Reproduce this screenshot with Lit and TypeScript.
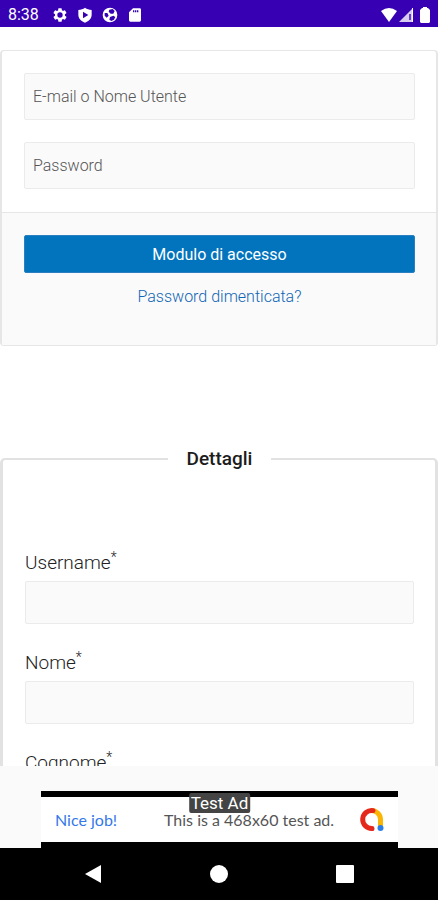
import { LitElement, html, css, svg } from "lit";
import { customElement } from "lit/decorators.js";

const gear = svg`<path fill-rule="evenodd" d="M19.4 13a7.5 7.5 0 0 0 0-2l2.1-1.65c.2-.15.25-.42.12-.64l-2-3.46a.5.5 0 0 0-.61-.22l-2.49 1a7.3 7.3 0 0 0-1.69-.98l-.38-2.65A.49.49 0 0 0 14 2h-4a.49.49 0 0 0-.49.42l-.38 2.65c-.61.25-1.17.59-1.69.98l-2.49-1a.49.49 0 0 0-.61.22l-2 3.46a.49.49 0 0 0 .12.64L4.57 11a7.9 7.9 0 0 0 0 2l-2.11 1.65a.5.5 0 0 0-.12.64l2 3.46c.12.22.39.3.61.22l2.49-1c.52.4 1.08.73 1.69.98l.38 2.65c.03.24.24.42.49.42h4c.25 0 .46-.18.49-.42l.38-2.65c.61-.25 1.17-.59 1.69-.98l2.49 1c.23.09.49 0 .61-.22l2-3.46a.5.5 0 0 0-.12-.64L19.4 13zM12 16a4 4 0 1 1 0-8 4 4 0 0 1 0 8z"/>`;
const shield = svg`<path fill-rule="evenodd" d="M12 1C9 3 6 4 2 4.500v7C2 17 6 21 12 23.500 18 21 22 17 22 11.500v-7C18 4 15 3 12 1zM9 7l8 5-8 5z"/>`;
const ball = svg`<path fill-rule="evenodd" d="M12 1a11 11 0 1 0 0 22 11 11 0 0 0 0-22zM11 4l5-1 3 3-2 4-4 0-3-3zM4 9l4 0 2 4-3 3-3-3zM12 15l5-2 3 2-2 4-4 2-3-2z"/>`;
const sdCard = svg`<path fill-rule="evenodd" d="M9 2h10a2 2 0 0 1 2 2v16a2 2 0 0 1-2 2H5a2 2 0 0 1-2-2V8zM9 5v3h2V5zm3 0v3h2V5zm3 0v3h2V5z"/>`;

@customElement("app-root")
export class AppRoot extends LitElement {
  static styles = css`
    :host {
      display: flex;
      flex-direction: column;
      height: 100vh;
      background: #fff;
      color: #222;
      font-family: Roboto, "Liberation Sans", sans-serif;
    }
    * { box-sizing: border-box; }
    input, button { font-family: inherit; margin: 0; }
    svg { display: block; }
    .status {
      display: flex;
      flex: none;
      align-items: center;
      height: 27px;
      padding: 2px 8px 0;
      background: #3700b3;
      color: #fff;
      font-size: 16px;
    }
    .notices { display: flex; gap: 9px; margin-left: 13px; }
    .signals { display: flex; gap: 1px; margin-left: auto; }
    .status svg { width: 16px; height: 16px; fill: #fff; }
    .status .battery { width: 10px; margin-left: 5px; }
    .page {
      flex: 1;
      min-height: 0;
      overflow-y: auto;
      scrollbar-width: none;
    }
    .login {
      margin-top: 23px;
      border: solid #e6e6e6;
      border-width: 1px 2px;
      border-radius: 4px;
    }
    .credentials {
      display: flex;
      flex-direction: column;
      gap: 22px;
      padding: 22px 21px 23px 22px;
    }
    .box {
      display: block;
      width: 100%;
      height: 43px;
      padding: 0 8px;
      border: 1px solid #ebebeb;
      border-radius: 2px;
      background: #fafafa;
      color: #222;
      font-size: 16px;
      font-weight: 300;
    }
    .credentials .box { height: 47px; }
    .box::placeholder { color: #555; }
    .actions {
      display: flex;
      flex-direction: column;
      align-items: center;
      gap: 12px;
      padding: 22px 21px 36px 22px;
      border-top: 1px solid #e6e6e6;
      background: #fafafa;
    }
    .submit {
      width: 100%;
      height: 38px;
      border: 1px solid #2a7fc0;
      border-radius: 2px;
      background: #0274be;
      color: #fff;
      font-size: 16px;
      font-weight: 400;
    }
    .forgot {
      color: #0f65b5;
      font-size: 16px;
      font-weight: 300;
      line-height: 24px;
      text-decoration: none;
    }
    .details {
      min-width: 0;
      margin: 99px 0 24px;
      padding: 76px 21px 24px 22px;
      border: solid #e2e2e2;
      border-width: 2px 3px;
      border-radius: 5px;
    }
    .legend {
      margin: 0 auto;
      padding: 0 19px;
      color: #1c1c1c;
      font-size: 19px;
      font-weight: 500;
      line-height: 28px;
    }
    .field { margin-bottom: 25px; }
    .label {
      display: block;
      margin-bottom: 4px;
      font-size: 19px;
      font-weight: 300;
      line-height: 28px;
    }
    .label sup { font-size: 14px; line-height: 0; }
    .ad {
      flex: none;
      padding: 25px 40px 0 41px;
      background: #fafafa;
    }
    .banner {
      position: relative;
      display: flex;
      align-items: center;
      justify-content: space-between;
      height: 57px;
      padding: 0 13px 0 14px;
      border: solid #000;
      border-width: 6px 0;
      background: #fff;
      color: #555;
      font-family: Lato, sans-serif;
      font-size: 16px;
      text-decoration: none;
    }
    .praise { color: #3478ea; }
    .banner svg { width: 26px; height: 26px; }
    .copy { margin: 0 0 0 22px; }
    .tag {
      position: absolute;
      top: -4px;
      left: 50%;
      transform: translateX(-50%);
      padding: 0 2px;
      border-radius: 2px;
      background: #444;
      color: #fff;
      font-family: Roboto, sans-serif;
      font-size: 17px;
      line-height: 20px;
      white-space: nowrap;
    }
    .nav {
      display: flex;
      flex: none;
      align-items: center;
      justify-content: center;
      gap: 78px;
      height: 52px;
      background: #000;
    }
    .key {
      display: grid;
      place-items: center;
      width: 48px;
      height: 48px;
      padding: 0;
      border: 0;
      background: none;
    }
    .key svg { width: 18px; height: 18px; fill: #fff; }
  `;

  private field(id: string, label: string) {
    return html`<div class="field">
      <label class="label" for=${id}>${label}<sup>*</sup></label>
      <input class="box" id=${id} type="text" required />
    </div>`;
  }

  render() {
    return html`
      <header class="status">
        <span>8:38</span>
        <div class="notices">
          ${[gear, shield, ball, sdCard].map((icon) => html`<svg viewBox="0 0 24 24">${icon}</svg>`)}
        </div>
        <div class="signals">
          <svg viewBox="0 0 16 16"><path d="M0 4Q8-2 16 4L8 15z" /></svg>
          <svg viewBox="0 0 16 16">
            <path d="M15 1v14H1z" fill-opacity=".8" />
            <path d="M11 7h2v6h-2z" fill="#3700b3" fill-opacity=".7" />
            <path d="M14 1h1v14h-1z" />
          </svg>
          <svg class="battery" viewBox="0 0 10 16"><path d="M3 0h4v1h1l2 2v12l-1 1H1l-1-1V3l2-2h1z" /></svg>
        </div>
      </header>
      <main class="page">
        <form class="login" @submit=${(e: Event) => e.preventDefault()}>
          <div class="credentials">
            <input class="box" type="text" aria-label="E-mail o Nome Utente" placeholder="E-mail o Nome Utente" />
            <input class="box" type="password" aria-label="Password" placeholder="Password" />
          </div>
          <div class="actions">
            <button class="submit" type="submit">Modulo di accesso</button>
            <a class="forgot" href="#recupero">Password dimenticata?</a>
          </div>
        </form>
        <fieldset class="details">
          <legend class="legend">Dettagli</legend>
          ${this.field("username", "Username")}
          ${this.field("nome", "Nome")}
          ${this.field("cognome", "Cognome")}
        </fieldset>
      </main>
      <aside class="ad">
        <a class="banner" href="#ad">
          <span class="praise">Nice job!</span>
          <span class="copy">This is a 468x60 test ad.</span>
          <svg viewBox="0 0 26 26" fill="none" stroke-width="5">
            <path d="M12 3.500A9 9 0 0 1 21.500 12.500V19" stroke="#fbb604" />
            <path d="M13 21.500A9 9 0 1 1 14 3.600" stroke="#e5281c" stroke-linecap="round" />
            <circle cx="21.500" cy="21" r="3" fill="#2b7de9" />
          </svg>
          <span class="tag">Test Ad</span>
        </a>
      </aside>
      <nav class="nav">
        <button class="key" aria-label="Indietro"><svg viewBox="0 0 18 18"><path d="M1 9 17 0v18z" /></svg></button>
        <button class="key" aria-label="Home"><svg viewBox="0 0 18 18"><circle cx="9" cy="9" r="9" /></svg></button>
        <button class="key" aria-label="Recenti"><svg viewBox="0 0 18 18"><rect width="18" height="18" rx="1" /></svg></button>
      </nav>
    `;
  }
}
